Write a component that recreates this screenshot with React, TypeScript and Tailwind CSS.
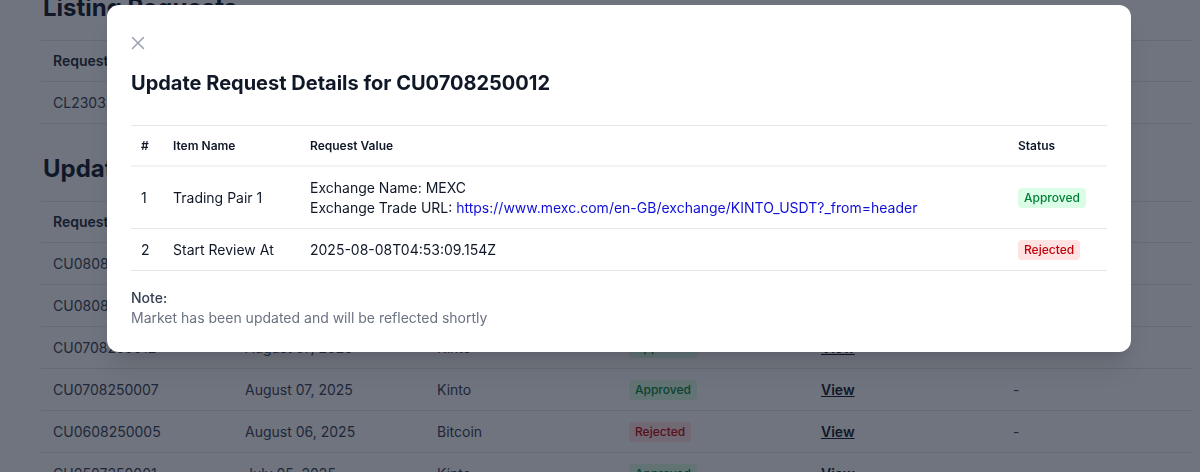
const listingRows = [
  { id: "CL2303250001", date: "March 23, 2025", name: "Kinto", status: "Approved" },
];

const updateRows = [
  { id: "CU0808250003", date: "August 08, 2025", name: "Kinto", status: "Approved" },
  { id: "CU0808250001", date: "August 08, 2025", name: "Kinto", status: "Approved" },
  { id: "CU0708250012", date: "August 07, 2025", name: "Kinto", status: "Approved" },
  { id: "CU0708250007", date: "August 07, 2025", name: "Kinto", status: "Approved" },
  { id: "CU0608250005", date: "August 06, 2025", name: "Bitcoin", status: "Rejected" },
  { id: "CU0507250001", date: "July 05, 2025", name: "Kinto", status: "Approved" },
];

const Badge = ({ status }: { status: string }) =>
  status === "Approved" ? (
    <span className="inline-block rounded bg-green-100 px-1.5 py-0.5 text-xs font-medium text-green-700">Approved</span>
  ) : (
    <span className="inline-block rounded bg-red-100 px-1.5 py-0.5 text-xs font-medium text-red-700">Rejected</span>
  );

const PageTable = ({ rows, heads }: { rows: typeof updateRows; heads: string[] }) => (
  <div className="mt-4 w-[1152px] border-t border-gray-200 text-sm text-gray-700">
    <div className="grid h-[41px] grid-cols-6 items-center border-b border-gray-200 font-semibold text-gray-800">
      {heads.map((h) => (
        <div key={h} className="px-3">{h}</div>
      ))}
    </div>
    {rows.map((r) => (
      <div key={r.id} className="grid h-[42px] grid-cols-6 items-center border-b border-gray-200">
        <div className="px-3">{r.id}</div>
        <div className="px-3">{r.date}</div>
        <div className="px-3">{r.name}</div>
        <div className="px-3"><Badge status={r.status} /></div>
        <div className="px-3"><span className="font-semibold text-gray-900 underline">View</span></div>
        <div className="px-3">-</div>
      </div>
    ))}
  </div>
);

export default function App() {
  return (
    <div className="relative h-[472px] overflow-hidden bg-white font-['Inter',_sans-serif]">
      <div className="pl-[41px]">
        <h2 className="-mt-2 pl-0.5 text-2xl font-bold text-gray-900">Listing Requests</h2>
        <PageTable rows={listingRows} heads={["Request ID", "Request Date", "Token Name", "Status", "Details", "Remarks"]} />
        <h2 className="mt-[29px] pl-0.5 text-2xl font-bold text-gray-900">Update Requests</h2>
        <PageTable rows={updateRows} heads={["Request ID", "Request Date", "Token Name", "Status", "Details", "Remarks"]} />
      </div>

      <div className="fixed inset-0 bg-gray-900/60">
        <div className="ml-[107px] mt-[5px] w-[1024px] rounded-xl bg-white px-6 pb-6 pt-[31px] shadow-xl">
          <button className="block h-[14px] w-[14px] text-gray-400">
            <svg viewBox="0 0 14 14" width="14" height="14" fill="none" stroke="currentColor" strokeWidth="1.5" strokeLinecap="round">
              <path d="M1.5 1.5l11 11M12.5 1.5l-11 11" />
            </svg>
          </button>
          <h3 className="mt-[19px] text-xl font-bold leading-7 text-gray-900">Update Request Details for CU0708250012</h3>

          <div className="mt-[28px] border-t border-gray-200 text-sm text-gray-900">
            <div className="flex h-[41px] items-center border-b-2 border-gray-100 text-xs font-semibold">
              <div className="w-[32px] pl-2.5">#</div>
              <div className="w-[137px] pl-2.5">Item Name</div>
              <div className="flex-1 pl-2.5">Request Value</div>
              <div className="w-[99px] pl-2.5">Status</div>
            </div>
            <div className="flex h-[62px] items-center border-b border-gray-200">
              <div className="w-[32px] pl-2.5">1</div>
              <div className="w-[137px] pl-2.5">Trading Pair 1</div>
              <div className="flex-1 pl-2.5 leading-5">
                <div>Exchange Name: MEXC</div>
                <div>
                  Exchange Trade URL:{" "}
                  <a className="text-[#1010d8]">https://www.mexc.com/en-GB/exchange/KINTO_USDT?_from=header</a>
                </div>
              </div>
              <div className="w-[99px] pl-2.5"><Badge status="Approved" /></div>
            </div>
            <div className="flex h-[42px] items-center border-b border-gray-200">
              <div className="w-[32px] pl-2.5">2</div>
              <div className="w-[137px] pl-2.5">Start Review At</div>
              <div className="flex-1 pl-2.5">2025-08-08T04:53:09.154Z</div>
              <div className="w-[99px] pl-2.5"><Badge status="Rejected" /></div>
            </div>
          </div>

          <div className="mt-[17px] text-sm leading-5">
            <div className="font-medium text-gray-700">Note:</div>
            <div className="text-gray-500">Market has been updated and will be reflected shortly</div>
          </div>
        </div>
      </div>
    </div>
  );
}
